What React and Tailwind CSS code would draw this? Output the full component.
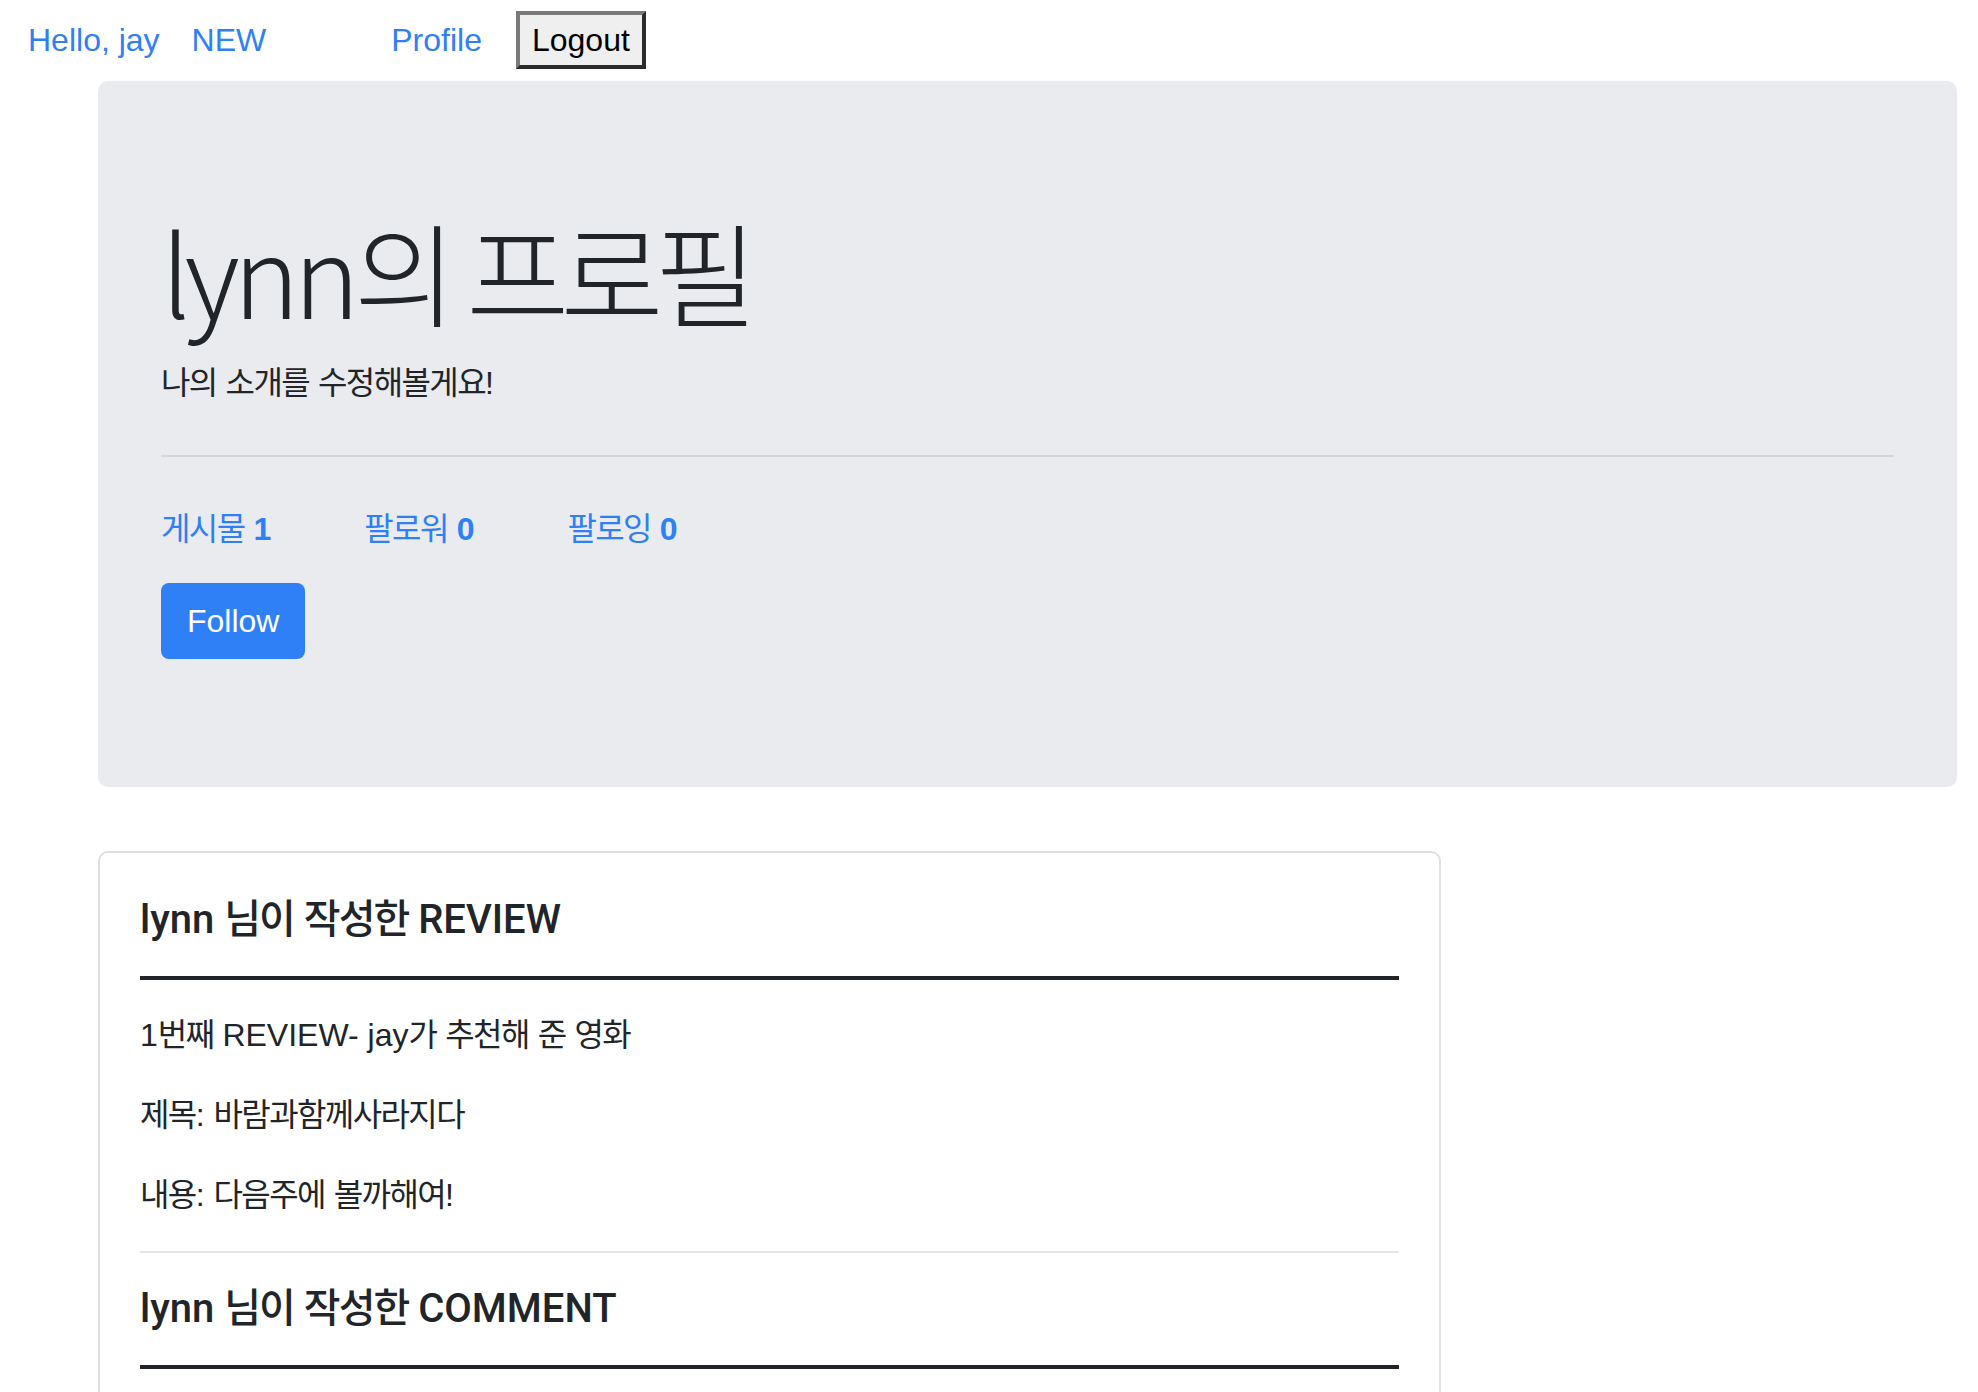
import React from 'react';

// hangul runs get tighter tracking so Noto matches the mac font widths
const HANGUL = /([\u1100-\u11FF\u3130-\u318F\uAC00-\uD7AF]+)/;

function K({ text, big }) {
  return text.split(HANGUL).map((part, i) =>
    HANGUL.test(part) ? (
      <span key={i} className={big ? 'tracking-[-0.08em]' : 'tracking-[-0.05em]'}>
        {part}
      </span>
    ) : (
      part
    )
  );
}

function Stat({ label, count }) {
  return (
    <a className="mr-[93px] text-[#2f7ff6]">
      <K text={label} /> <b className="font-bold">{count}</b>
    </a>
  );
}

function CardHeading({ text }) {
  return (
    <h5 className="text-[40px] font-medium leading-[48px] font-['Roboto','Noto_Sans_CJK_KR',sans-serif]">
      <K text={text} />
    </h5>
  );
}

export default function App() {
  return (
    <div className="min-h-screen bg-white pt-[11px] text-[#212529] font-['Liberation_Sans','Noto_Sans_CJK_KR',sans-serif]">
      {/* top nav */}
      <nav className="flex h-[58px] items-center pl-[28px] text-[32px] leading-[48px]">
        <a className="text-[#2f7ff6]">Hello, jay</a>
        <a className="ml-[32px] text-[#2f7ff6]">NEW</a>
        <a className="ml-[125px] text-[#2f7ff6]">Profile</a>
        <button className="ml-[34px] h-[58px] border-4 border-t-[#7a7a7a] border-l-[#7a7a7a] border-b-[#2b2b2b] border-r-[#2b2b2b] bg-[#efefef] px-[12px] text-[32px] leading-[48px] text-black">
          Logout
        </button>
      </nav>

      {/* jumbotron */}
      <section className="ml-[98px] mt-[12px] w-[1859px] rounded-[10px] bg-[#e9ebef] px-[63px] pb-[128px] pt-[128px]">
        <h1 className="mb-[27px] text-[112px] font-light leading-[123px] tracking-[-0.055em] font-['Noto_Sans_CJK_KR',sans-serif]">
          <K text="lynn의 프로필" big />
        </h1>
        <p className="text-[32px] leading-[48px]">
          <K text="나의 소개를 수정해볼게요!" />
        </p>
        <div className="my-[48px] h-[2px] bg-[#d3d5d9]" />
        <div className="mb-[30px] flex text-[32px] leading-[48px]">
          <Stat label="게시물" count="1" />
          <Stat label="팔로워" count="0" />
          <Stat label="팔로잉" count="0" />
        </div>
        <button className="h-[76px] rounded-[8px] bg-[#2f7ff6] px-[26px] text-[32px] leading-[48px] text-white">
          Follow
        </button>
      </section>

      {/* posts card */}
      <div className="ml-[98px] mt-[64px] w-[1343px] rounded-[10px] border-2 border-[#dfdfdf] px-[40px] pb-[40px] pt-[43px]">
        <CardHeading text="lynn 님이 작성한 REVIEW" />
        <div className="mb-[31px] mt-[32px] h-[4px] bg-[#212529]" />
        <div className="text-[32px] leading-[48px]">
          <p className="mb-[32px]">
            <K text="1번째 REVIEW- jay가 추천해 준 영화" />
          </p>
          <p className="mb-[32px]">
            <K text="제목: 바람과함께사라지다" />
          </p>
          <p className="mb-[32px]">
            <K text="내용: 다음주에 볼까해여!" />
          </p>
        </div>
        <div className="mb-[32px] h-[2px] bg-[#e5e5e5]" />
        <CardHeading text="lynn 님이 작성한 COMMENT" />
        <div className="mb-[32px] mt-[32px] h-[4px] bg-[#212529]" />
        <p className="text-[32px] leading-[48px]">&nbsp;</p>
      </div>
    </div>
  );
}
